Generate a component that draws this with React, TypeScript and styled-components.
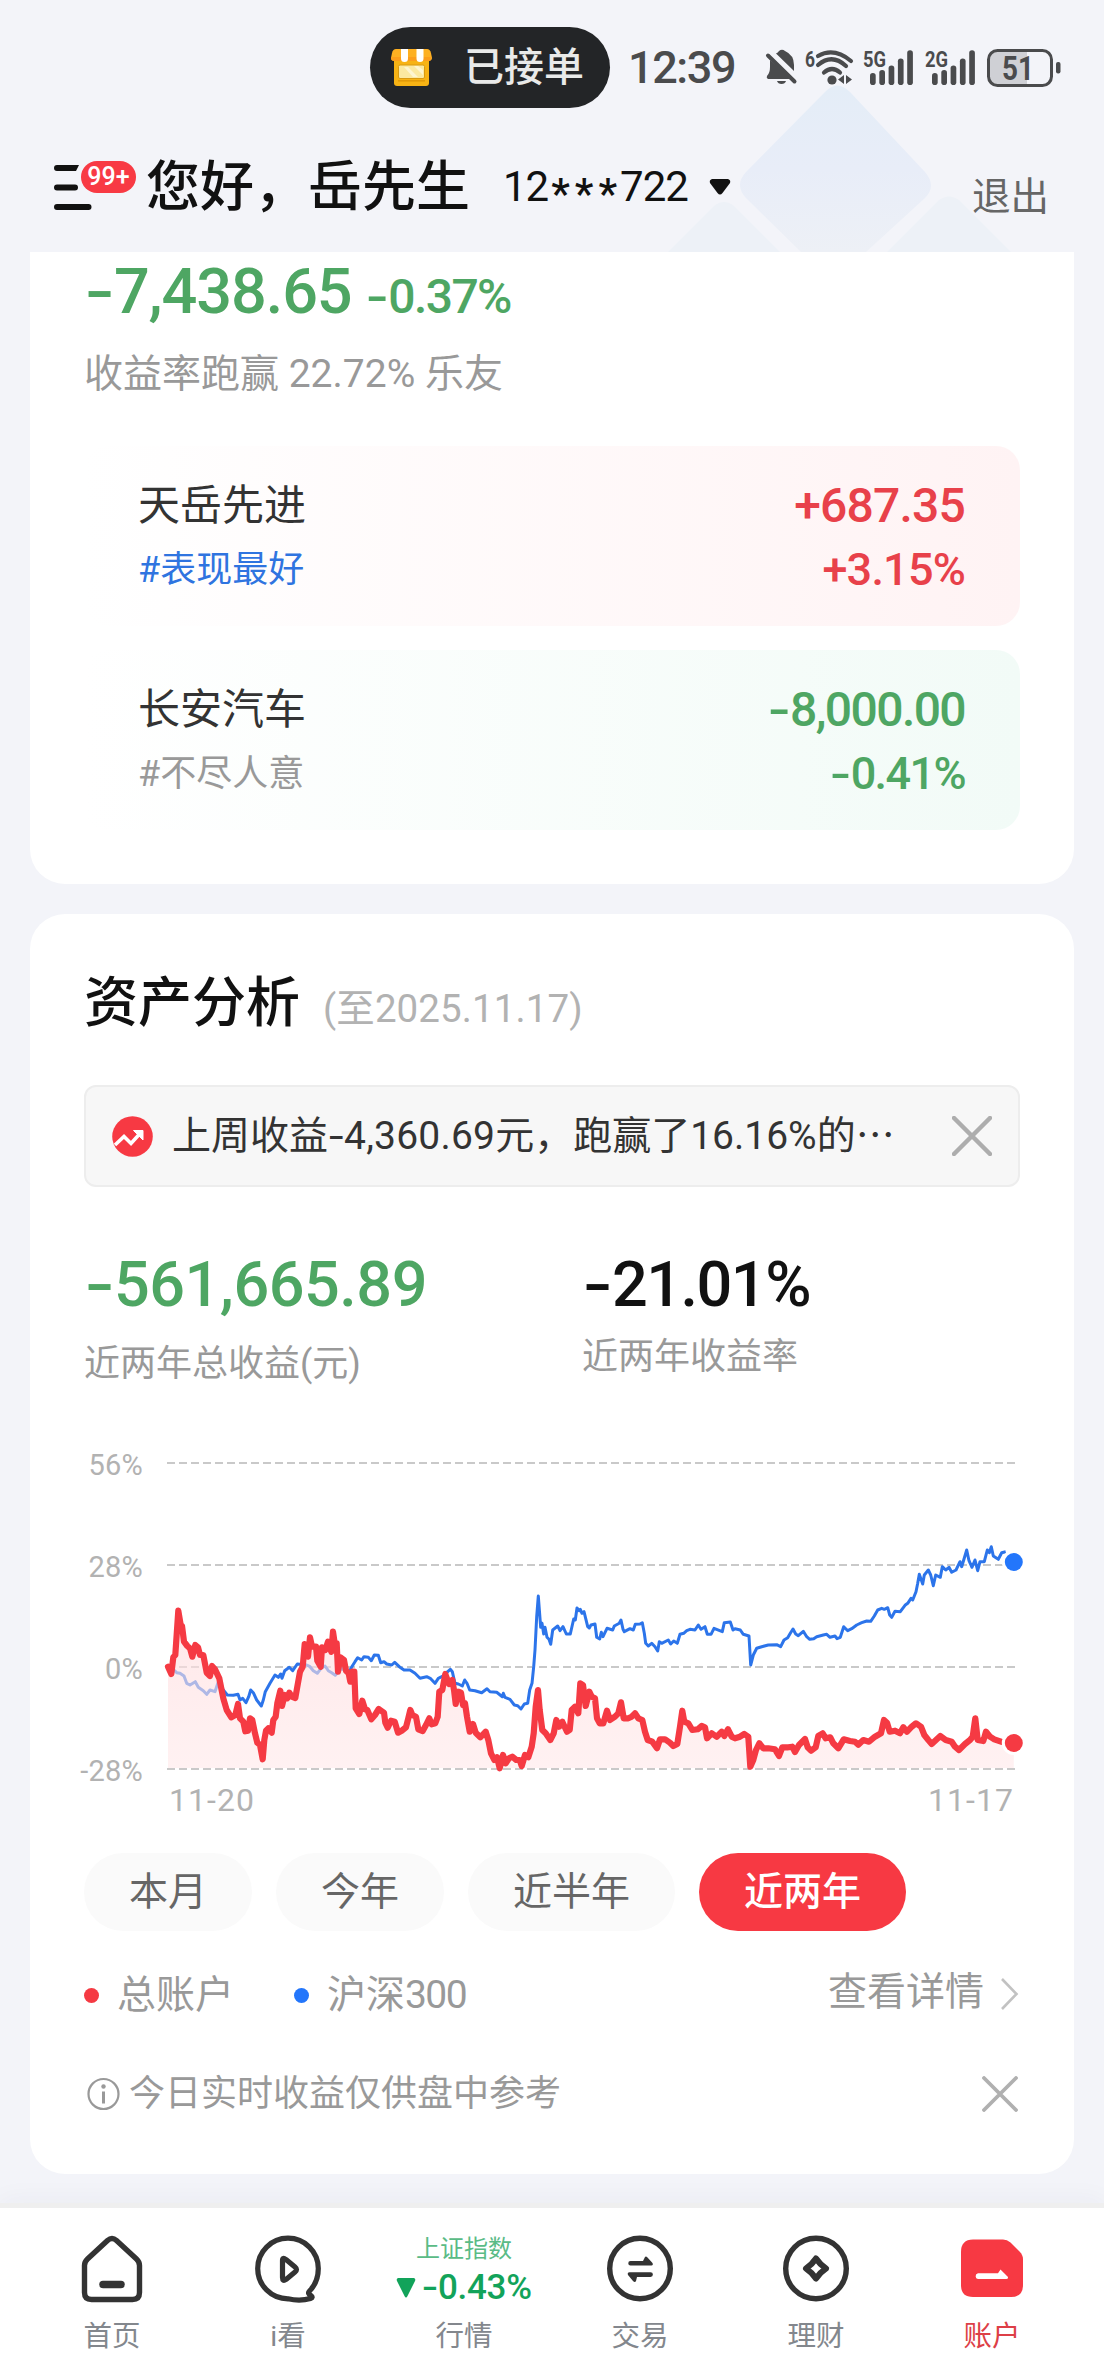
import React from "react";
import styled, { createGlobalStyle } from "styled-components";

const GREEN = "#4ea663";
const RED = "#e8414a";

const GlobalStyle = createGlobalStyle`
  * { box-sizing: border-box; }
  body {
    margin: 0;
    background: #f3f4f9;
    font-family: Roboto, "Noto Sans CJK SC", sans-serif;
    -webkit-font-smoothing: antialiased;
  }
`;

const Page = styled.div`
  width: 1104px;
  height: 2376px;
  display: flex;
  flex-direction: column;
  position: relative;
  overflow: hidden;
  background: #f3f4f9;
`;

const Decoration = styled.svg`
  position: absolute;
  left: 640px;
  top: 60px;
`;

type TextProps = {
  $size: number;
  $color?: string;
  $weight?: number;
  $track?: number;
  $line?: number;
};

const Text = styled.span<TextProps>`
  display: block;
  white-space: nowrap;
  font-size: ${(p) => p.$size}px;
  color: ${(p) => p.$color ?? "#333"};
  font-weight: ${(p) => p.$weight ?? 400};
  letter-spacing: ${(p) => p.$track ?? 0}px;
  line-height: ${(p) => (p.$line ? `${p.$line}px` : "1.2")};
`;

const Minus = styled.span`
  display: inline-block;
  margin: 0 0.06em 0 0.075em;
  transform: scaleX(1.35);
  letter-spacing: 0;
`;

const Digits = styled.span<{ $track: number }>`
  letter-spacing: ${(p) => p.$track}px;
`;

function Num({ value }: { value: string }) {
  const parts = value.split("-");
  return (
    <>
      {parts.map((part, i) => (
        <React.Fragment key={i}>
          {i > 0 && <Minus>-</Minus>}
          {part}
        </React.Fragment>
      ))}
    </>
  );
}

/* ---------- status bar ---------- */

const StatusBar = styled.div`
  position: relative;
  height: 135px;
  display: flex;
  align-items: center;
  padding-left: 370px;
  flex: none;
`;

const Island = styled.div`
  flex: none;
  width: 240px;
  height: 81px;
  border-radius: 41px;
  background: #232527;
  display: flex;
  align-items: center;
  padding-left: 20px;
  gap: 31px;
  margin-right: 18px;
`;

const Clock = styled(Text)`
  width: 107px;
`;

const StatusIcons = styled.svg`
  flex: none;
  margin-left: 30px;
  overflow: visible;
`;

function StoreIcon() {
  return (
    <svg width="43" height="40" viewBox="0 0 43 40">
      <rect x="4" y="8" width="35" height="30" rx="3" fill="#f7b314" />
      <rect x="8.500" y="17" width="26" height="13.500" rx="1.500" fill="#fbe9a0" stroke="#d99a10" />
      <path d="M14 19l9 10h5L18 19z M24 18l9 9v-5l-5-4z" fill="#fdf5d0" />
      <rect x="8" y="32" width="27" height="1.600" fill="#e29a08" />
      <path d="M6 1h31q3 0 4 4l1 5q0 3-4 3H5q-4 0-4-3l1-5q1-4 4-4z" fill="#fdb022" />
      <path d="M2 9h39v2q0 2-3 2H4q-3 0-3-3z" fill="#fc9e1c" />
      <path d="M11 1h7v9.500a3.500 3.500 0 0 1-7 0z M26.500 1h7v9.500a3.500 3.500 0 0 1-7 0z" fill="#fff" />
    </svg>
  );
}

const SIGNAL_TOPS = [24, 21, 16.5, 9.5, 1.3];

function Signal({ x, label }: { x: number; label: string }) {
  return (
    <g>
      <text x={x} y="18" fontSize="22" fontWeight="700" fill="#4a4b4d" textLength="23" lengthAdjust="spacingAndGlyphs">
        {label}
      </text>
      {SIGNAL_TOPS.map((top, i) => (
        <rect key={i} x={x + 7 + i * 9.3} y={top} width="5.700" height={36 - top} rx="2.800" fill="#4a4b4d" />
      ))}
    </g>
  );
}

function SystemIcons() {
  const ink = "#4a4b4d";
  return (
    <StatusIcons width="302" height="38" viewBox="0 0 302 38">
      <g fill={ink}>
        <path d="M11 4.500q2-1 3-2.500q3-2.500 6 0q9 4 9 14v6z" />
        <path d="M5 11l22 19H3q-2-1-1-3q3-3 3-9z" />
        <path d="M12 32h9q-1 3-4.500 3t-4.500-3z" />
        <path d="M3 6.500l26.500 26" stroke={ink} strokeWidth="4" strokeLinecap="round" />
      </g>
      <text x="40" y="18" fontSize="22" fontWeight="700" fill={ink} textLength="10" lengthAdjust="spacingAndGlyphs">
        6
      </text>
      <g fill="none" stroke={ink} strokeWidth="4.200" strokeLinecap="round">
        <path d="M53 7q16-9 33 5" />
        <path d="M53 16q14-12 28 1" />
        <path d="M59 23.500q8-7 16 0" />
      </g>
      <circle cx="67" cy="31" r="4.600" fill={ink} />
      <path d="M79 26v9l-6-4.500z M81 26v9l6-4.500z" fill={ink} />
      <Signal x={98} label="5G" />
      <Signal x={160} label="2G" />
      <path d="M231 2h31v34h-31q-8 0-8-8V10q0-8 8-8z" fill="#cfd0d5" />
      <rect x="223.500" y="1.500" width="63" height="35" rx="9" fill="none" stroke={ink} strokeWidth="3" />
      <rect x="291" y="13" width="4.500" height="11.500" rx="2" fill={ink} />
      <text x="237" y="30.500" fontSize="33" fontWeight="700" fill={ink} textLength="32" lengthAdjust="spacingAndGlyphs">
        51
      </text>
    </StatusIcons>
  );
}

/* ---------- header ---------- */

const Header = styled.header`
  position: relative;
  height: 117px;
  flex: none;
  display: flex;
  align-items: center;
  padding: 0 55px 17px 54px;
`;

const MenuButton = styled.div`
  position: relative;
  width: 92px;
  height: 48px;
`;

const Badge = styled.div`
  position: absolute;
  left: 27px;
  top: 0;
  width: 55px;
  height: 32px;
  border-radius: 16px;
  background: #f83a44;
  color: #fff;
  font-size: 25px;
  font-weight: 500;
  line-height: 32px;
  text-align: center;
`;

const MenuLines = styled.svg`
  display: block;
`;

const Greeting = styled(Text)`
  margin-top: 6px;
`;

const Account = styled.div`
  display: flex;
  align-items: center;
  gap: 21px;
  margin: 3px 0 0 33px;
  flex: 1;
`;

const Mask = styled.span`
  display: inline-block;
  font-weight: 500;
  letter-spacing: 5px;
  vertical-align: -7px;
  line-height: 1;
  margin: 0 -2px 0 3px;
`;

const Logout = styled(Text)`
  margin-top: 23px;
`;

/* ---------- cards ---------- */

const Card = styled.section<{ $first?: boolean }>`
  position: relative;
  flex: none;
  width: 1044px;
  height: ${(p) => (p.$first ? 632 : 1260)}px;
  margin: 0 30px 30px;
  padding: ${(p) => (p.$first ? 0 : 50)}px 54px 0;
  border-radius: ${(p) => (p.$first ? "0 0 35px 35px" : "35px")};
  background: #fff;
  display: flex;
  flex-direction: column;
`;

const BaselineRow = styled.div<{ $gap: number }>`
  display: flex;
  align-items: baseline;
  gap: ${(p) => p.$gap}px;
`;

const Beat = styled(Text)`
  margin: 18px 0 48px 0;
`;

const StockRow = styled.div<{ $tint: string }>`
  height: 180px;
  flex: none;
  margin-bottom: 24px;
  padding: 28px 55px 0 54px;
  border-radius: 24px;
  background: linear-gradient(90deg, #fff 0%, ${(p) => p.$tint} 100%);
  display: flex;
  justify-content: space-between;
`;

const StockSide = styled.div<{ $end?: boolean }>`
  display: flex;
  flex-direction: column;
  align-items: ${(p) => (p.$end ? "flex-end" : "flex-start")};
`;

const Notice = styled.div`
  height: 102px;
  margin-top: 41px;
  padding: 0 26px;
  display: flex;
  align-items: center;
  border: 2px solid #ededed;
  border-radius: 12px;
  background: #f7f7f7;
`;

const NoticeText = styled(Text)`
  flex: 1;
  margin-left: 19px;
`;

const Stats = styled.div`
  display: flex;
  height: 196px;
  margin-top: 57px;
`;

const Stat = styled.div<{ $width: number; $gap: number }>`
  width: ${(p) => p.$width}px;
  display: flex;
  flex-direction: column;
  gap: ${(p) => p.$gap}px;
`;

const Chart = styled.svg`
  display: block;
  flex: none;
  overflow: visible;
  font-family: Roboto, sans-serif;
`;

const Periods = styled.div`
  display: flex;
  gap: 24px;
  margin-top: 33px;
`;

const Period = styled.button<{ $active?: boolean; $wide?: boolean }>`
  width: ${(p) => (p.$wide ? 207 : 168)}px;
  height: 78px;
  padding: 0;
  border: 0;
  border-radius: 39px;
  font-family: inherit;
  font-size: 39px;
  line-height: 78px;
  font-weight: ${(p) => (p.$active ? 500 : 400)};
  color: ${(p) => (p.$active ? "#fff" : "#666")};
  background: ${(p) => (p.$active ? "#f73943" : "#fafafa")};
`;

const Legend = styled.div`
  height: 60px;
  margin-top: 34px;
  display: flex;
  align-items: center;
`;

const Dot = styled.i<{ $color: string }>`
  width: 15px;
  height: 15px;
  border-radius: 50%;
  background: ${(p) => p.$color};
`;

const LegendItem = styled.div<{ $width: number }>`
  width: ${(p) => p.$width}px;
  display: flex;
  align-items: center;
  gap: 18px;
`;

const Details = styled.div`
  margin: 0 1px 7px auto;
  display: flex;
  align-items: center;
  gap: 16px;
`;

const Hint = styled.div`
  height: 50px;
  margin-top: 44px;
  display: flex;
  align-items: center;
  padding: 0 2px 0 3px;
`;

const HintText = styled(Text)`
  flex: 1;
  margin-left: 9px;
`;

/* ---------- tab bar ---------- */

const TabBar = styled.nav`
  position: relative;
  flex: none;
  height: 173px;
  margin-top: -1px;
  padding: 0 24px;
  border-top: 5px solid #efefef;
  box-shadow: 0 -4px 24px rgba(60, 60, 80, 0.04);
  background: #fff;
  display: flex;
`;

const Tab = styled.div`
  width: 176px;
  padding-top: 27px;
  display: flex;
  flex-direction: column;
  align-items: center;
`;

const TabArt = styled.div`
  height: 82px;
`;

const Quote = styled.div`
  height: 82px;
  display: flex;
  flex-direction: column;
  align-items: center;
`;

const QuoteValue = styled.div`
  display: flex;
  align-items: center;
  gap: 5px;
  margin-top: 8px;
`;

/* ---------- chart data ---------- */

// Pairs of x,y at three units per pixel, with the zero line at y = 381.
const ACCOUNT = [
  [0, "24,380 34,402 40,352 46,345 55,212 62,255 66,258 72,305 82,318 90,325 97,350 106,315 114,322 120,345 130,345 140,398 150,408 156,378 165,388 178,415 190,475 200,510 214,532 226,525 234,492 240,535 250,545 256,574 264,572 270,535 277,540 285,580 292,608 300,615 308,658 313,600 318,572 325,565 335,578 340,540 347,530 352,490 361,452 366,498 374,465 382,475 388,458 395,470 406,474 412,440 420,395 428,380 434,312 444,350 450,292 456,320 468,320 472,362 482,380 486,322 496,330 504,305 514,335 519,275 524,310 530,310 534,395 541,352 552,360 558,392 566,400 571,425 576,395 583,395 587,505 598,522 607,482 615,508 622,510 634,538 645,525 656,507 672,518 676,548 683,563 693,542 704,545 714,578 725,572 738,562 745,535 751,510 757,525 768,530 775,568 788,573 798,555 808,535 815,553 826,550 833,530 838,455 847,450 856,402"],
  [855, "12,432 22,420 27,450 32,492 40,455 48,458 54,495 60,490 66,530 74,575 84,552 92,578 106,592 122,575 130,600 138,640 148,660 156,652 164,685 174,645 182,670 192,655 202,650 214,660 224,660 230,678 240,645 250,652 260,620 266,580 272,500 279,450 284,510 292,570 302,580 316,600 326,580 334,540 342,560 352,545 366,575 374,570 380,510 390,500 400,520 406,430 414,435 422,498 433,455 440,470 450,475 456,535 464,550 475,550 486,512 495,540 510,530 520,520 528,487 536,535 550,535 560,530 570,520 580,535 592,540 600,575 608,600 622,605 636,625 645,598 660,598 675,608 685,618 697,612 705,560 712,512 718,545 730,550 742,570 758,568 770,558 780,562 786,595 800,580 815,590 830,575 838,588 849,568 860,590"],
  [1725, "0,595 15,590 28,582 40,590 46,680 55,660 63,630 73,610 85,625 100,625 120,628 132,648 142,622 160,622 172,620 180,636 192,615 210,597 218,622 228,632 242,622 250,588 263,580 272,595 286,592 295,610 310,625 326,598 345,603 360,605 370,614 385,600 402,605 420,590 438,580 447,540 456,548 464,575 480,572 495,580 505,562 516,575 530,560 543,550 558,560 568,585 580,600 590,612 603,600 616,588 632,600 650,605 660,620 672,630 690,612 705,600 713,590 721,535 728,600 745,603 753,575 765,590 778,598 798,605"],
] as const;

const INDEX = [
  [0, "24,380 36,385 50,398 60,400 72,408 80,430 90,435 106,425 115,442 130,452 140,463 150,450 165,455 175,425 190,450 202,465 220,466 234,463 240,480 248,475 258,488 266,470 272,450 280,458 290,480 304,498 310,480 316,455 330,430 345,405 355,412 362,402 366,415 374,392 388,382 398,392 412,372 440,375 450,380 460,392 472,400 483,385 495,378 505,392 515,398 526,406 545,385 565,400 577,378 585,365 593,353 605,360 612,350 625,352 634,362 643,345 655,346 662,368 672,365 680,372 695,375 704,367 718,380 732,390 750,390 765,400 780,415 800,410 812,416 825,430 835,415 845,410 855,405 864,394"],
  [855, "16,388 22,395 30,430 40,432 52,438 59,420 66,430 74,450 90,452 110,458 126,446 135,455 155,457 172,470 175,460 180,472 195,478 208,495 218,497 228,507 238,492 248,490 254,450 261,430 266,380 270,330 275,230 280,168 287,262 291,250 296,282 300,262 306,292 312,298 317,313 323,270 338,258 345,272 354,260 364,282 376,282 386,237 391,240 396,204 402,212 406,208 411,220 417,215 428,260 433,264 438,255 450,252 455,292 464,297 469,277 474,290 486,265 503,270 508,258 523,250 528,240 534,268 538,275 555,266 565,270 571,253 585,252 592,248 598,280 602,310 610,318 620,310 630,320 638,333 643,305 650,310 670,300 677,312 686,303 697,310 705,283 716,280 725,272 735,268 750,270 760,255 768,268 780,260 787,283 798,283 807,265 832,275 838,248 856,246 864,270"],
  [1725, "0,266 16,270 25,283 42,288 47,375 55,345 65,325 80,320 100,315 125,314 137,320 147,300 158,293 166,280 174,267 182,282 190,287 205,274 215,290 224,298 236,296 245,290 265,285 275,283 285,292 300,288 306,296 316,292 326,260 338,272 350,266 365,255 380,248 395,243 407,244 418,228 428,210 440,205 448,208 458,203 464,225 470,232 480,214 496,215 510,196 518,190 528,175 533,180 543,155 548,130 553,103 563,132 568,105 580,90 587,105 595,137 602,105 616,112 622,80 632,90 642,82 650,97 663,90 675,65 680,80 695,30 702,62 711,82 720,60 728,92 735,65 748,65 757,30 763,38 769,20 775,48 790,58 800,38 812,35"],
] as const;

function toPoints(runs: readonly (readonly [number, string])[]) {
  return runs
    .flatMap(([shift, run]) =>
      run.split(" ").map((pair) => {
        const [x, y] = pair.split(",").map(Number);
        return `${((x + shift) / 3 + 76).toFixed(1)},${(y / 3 + 100).toFixed(1)}`;
      })
    )
    .join(" ");
}

const GRID = [
  { y: 23, label: "56%" },
  { y: 125, label: "28%" },
  { y: 227, label: "0%" },
  { y: 329, label: "-28%" },
];

function ReturnChart() {
  const account = toPoints(ACCOUNT);
  const index = toPoints(INDEX);
  return (
    <Chart width="950" height="380" viewBox="0 0 950 380">
      <defs>
        <linearGradient id="area" x1="0" y1="0" x2="0" y2="1">
          <stop offset="0" stopColor="#ffdadc" />
          <stop offset="1" stopColor="#ffe9ea" />
        </linearGradient>
      </defs>
      {GRID.map((line) => (
        <g key={line.label}>
          <path d={`M83 ${line.y}H931`} stroke="#c9c9c9" strokeWidth="2" strokeDasharray="8 4" />
          <text x="59" y={line.y + 11.5} fontSize="29" letterSpacing="0.2" fill="#b2b2b2" textAnchor="end">
            {line.label}
          </text>
        </g>
      ))}
      <polyline points={index} fill="none" stroke="#2c74ea" strokeWidth="3" strokeLinejoin="round" />
      <polygon points={`84,328 ${account} 929.8,303 929.8,328`} fill="url(#area)" fillOpacity="0.62" />
      <polyline points={account} fill="none" stroke="#f53a43" strokeWidth="6.200" strokeLinejoin="round" strokeLinecap="round" />
      <circle cx="929.8" cy="122" r="12" fill="#fff" />
      <circle cx="929.8" cy="122" r="9" fill="#2376fb" />
      <circle cx="929.8" cy="303" r="12" fill="#fff" />
      <circle cx="929.8" cy="303" r="9" fill="#f53a43" />
      <text x="85" y="371" fontSize="32" fill="#b2b2b2" textLength="85">
        11-20
      </text>
      <text x="844" y="371" fontSize="32" fill="#b2b2b2" textLength="85">
        11-17
      </text>
    </Chart>
  );
}

function Cross({ size, width, color }: { size: number; width: number; color: string }) {
  return (
    <svg width={size} height={size} viewBox={`0 0 ${size} ${size}`}>
      <path
        d={`M2 2L${size - 2} ${size - 2}M${size - 2} 2L2 ${size - 2}`}
        stroke={color}
        strokeWidth={width}
        strokeLinecap="round"
      />
    </svg>
  );
}

/* ---------- tab icons ---------- */

const INK = "#333";

const HomeIcon = () => (
  <svg width="66" height="68" viewBox="0 0 66 68">
    <path
      d="M28.500 5.500q4.500-4 9 0l20 18.500q3 2.800 3 6.500v27q0 7-7 7h-41q-7 0-7-7v-27q0-3.700 3-6.500z"
      fill="none" stroke={INK} strokeWidth="5.400" strokeLinejoin="round"
    />
    <path d="M24 49.500h18" stroke={INK} strokeWidth="7.500" strokeLinecap="round" />
  </svg>
);

const VideoIcon = () => (
  <svg width="66" height="68" viewBox="0 0 66 68">
    <path
      d="M54.500 56Q63.300 47 63.300 33.500A30.300 30.300 0 1 0 33 63.800Q45 66.500 55.500 63.500Q58.500 62.500 56 60.500Q52 58.500 54.500 56z"
      fill="none" stroke={INK} strokeWidth="5.200" strokeLinejoin="round"
    />
    <path d="M27.500 25.500v17q0 4.500 3.500 2l9-7.500q3-2.500 0-5l-9-7.500q-3.500-2.500-3.500 1z" fill="none" stroke={INK} strokeWidth="5.200" strokeLinejoin="round" />
  </svg>
);

const TradeIcon = () => (
  <svg width="66" height="68" viewBox="0 0 66 68">
    <circle cx="33" cy="33.500" r="30.300" fill="none" stroke={INK} strokeWidth="5.400" />
    <path d="M23.500 26H36l2-4q1-1 2.500.5l5 5.500q1 2-1 2.500h-21a2.200 2.200 0 0 1 0-4.500z" fill={INK} />
    <path d="M43.500 42H30l-1 4q-1 2-3 0l-5-6q-1-2.500 1.500-2.800h21a2.400 2.400 0 0 1 0 4.800z" fill={INK} />
  </svg>
);

const WealthIcon = () => (
  <svg width="66" height="68" viewBox="0 0 66 68">
    <circle cx="33" cy="33.500" r="30.300" fill="none" stroke={INK} strokeWidth="5.400" />
    <path d="M33 23.500q4 6 10 10q-6 4-10 10q-4-6-10-10q6-4 10-10z" fill="none" stroke={INK} strokeWidth="6" strokeLinejoin="round" />
  </svg>
);

const AccountIcon = () => (
  <svg width="66" height="68" viewBox="0 0 66 68">
    <path d="M14 4.500h30q4 0 7.500 3l9 9q3.500 3.500 3.500 7.500v26q0 12-12 12H14q-12 0-12-12v-33q0-12.500 12-12.500z" fill="#f73943" />
    <path d="M19 38.300h20l2.500-3.800 7.500 7.500q.5 2-1.500 2H19a2.900 2.900 0 0 1 0-5.700z" fill="#fff" />
  </svg>
);

function PlainTab({ icon, label, active }: { icon: React.ReactNode; label: string; active?: boolean }) {
  return (
    <Tab>
      <TabArt>{icon}</TabArt>
      <Text $size={28.5} $line={40} $color={active ? "#dd3f47" : "#83878d"}>
        {label}
      </Text>
    </Tab>
  );
}

type StockProps = {
  name: string;
  tag: string;
  tagColor: string;
  amount: string;
  rate: string;
  color: string;
  tint: string;
  track: number;
};

function Stock({ name, tag, tagColor, amount, rate, color, tint, track }: StockProps) {
  return (
    <StockRow $tint={tint}>
      <StockSide>
        <Text $size={42} $line={64}>{name}</Text>
        <Text $size={36} $line={64} $color={tagColor}>{tag}</Text>
      </StockSide>
      <StockSide $end>
        <Text $size={48} $line={64} $weight={500} $track={track} $color={color}><Num value={amount} /></Text>
        <Text $size={45} $line={64} $weight={500} $track={track} $color={color}><Num value={rate} /></Text>
      </StockSide>
    </StockRow>
  );
}

export default function App() {
  return (
    <Page lang="zh-CN">
      <GlobalStyle />
      <Decoration width="400" height="192" viewBox="0 0 400 192">
        <defs>
          <linearGradient id="dia" x1="0" y1="0" x2="0" y2="1">
            <stop offset="0" stopColor="#e4edf7" />
            <stop offset="0.5" stopColor="#e8edf8" />
            <stop offset="1" stopColor="#edf0f6" />
          </linearGradient>
        </defs>
        <path d="M185 32q12-13 25 0l75 80q12 14 0 26l-59 54h-65l-55-54q-12-13 0-26z" fill="url(#dia)" />
        <path d="M74 146q10-8 20 0l46 46H28z" fill="#edf1f7" />
        <path d="M298 141q11-9 22 0l51 51H247z" fill="#edf1f7" />
      </Decoration>

      <StatusBar>
        <Island>
          <StoreIcon />
          <Text $size={40} $color="#e9eae9" $line={62} $weight={500}>已接单</Text>
        </Island>
        <Clock $size={45} $color="#4a4b4d" $line={64} $track={-1.4} $weight={500}>12:39</Clock>
        <SystemIcons />
      </StatusBar>

      <Header>
        <MenuButton>
          <MenuLines width="40" height="52" viewBox="0 0 40 52">
            <path d="M3 4H25l-3 6H3a3 3 0 0 1 0-6z M3 23.500H21a3 3 0 0 1 0 6H3a3 3 0 0 1 0-6z M3 43H34.500a3 3 0 0 1 0 6H3a3 3 0 0 1 0-6z" fill="#111" />
          </MenuLines>
          <Badge>99+</Badge>
        </MenuButton>
        <Greeting $size={54} $line={70} $weight={500} $color="#111">您好，岳先生</Greeting>
        <Account>
          <Text $size={42} $line={62} $color="#111" $track={-1}>12<Mask>***</Mask>722</Text>
          <svg width="22" height="18" viewBox="0 0 22 18">
            <path d="M3 1h16q3 1 2 4l-7.500 10q-2.500 3-5 0L1 5q-1-3 2-4z" fill="#111" />
          </svg>
        </Account>
        <Logout $size={38.5} $line={50} $color="#666">退出</Logout>
      </Header>

      <Card $first>
        <BaselineRow $gap={14}>
          <Text $size={63} $line={80} $weight={500} $track={-1.1} $color={GREEN}><Num value="-7,438.65" /></Text>
          <Text $size={48} $line={60} $weight={500} $track={-1.6} $color={GREEN}><Num value="-0.37%" /></Text>
        </BaselineRow>
        <Beat $size={39} $line={48} $color="#999">
          收益率跑赢 <Digits $track={0}>22.72%</Digits> 乐友
        </Beat>
        <Stock name="天岳先进" tag="#表现最好" tagColor="#2f74e0" amount="+687.35" rate="+3.15%" color={RED} tint="#fff3f4" track={-0.8} />
        <Stock name="长安汽车" tag="#不尽人意" tagColor="#999" amount="-8,000.00" rate="-0.41%" color={GREEN} tint="#f2fbf7" track={-1.6} />
      </Card>

      <Card>
        <BaselineRow $gap={23}>
          <Text $size={54} $line={80} $weight={500} $color="#111">资产分析</Text>
          <Text $size={38.5} $line={60} $track={0.1} $color="#b2b2b2">(至2025.11.17)</Text>
        </BaselineRow>

        <Notice>
          <svg width="41" height="41" viewBox="0 0 41 41">
            <circle cx="20.500" cy="20.500" r="20.300" fill="#f73943" />
            <path d="M3 29l9-8.500 7 7 9-10" fill="none" stroke="#fff" strokeWidth="3.600" />
            <path d="M21.500 14.500h9.500v9.500z" fill="#fff" stroke="#fff" />
          </svg>
          <NoticeText $size={39} $line={60}>
            上周收益<Digits $track={0.2}><Num value="-4,360.69" /></Digits>元，跑赢了16.16%的⋯
          </NoticeText>
          <Cross size={40} width={4.5} color="#adadad" />
        </Notice>

        <Stats>
          <Stat $width={498} $gap={17}>
            <Text $size={63} $line={81} $weight={500} $track={-0.5} $color={GREEN}><Num value="-561,665.89" /></Text>
            <Text $size={36} $line={44} $color="#999">近两年总收益(元)</Text>
          </Stat>
          <Stat $width={400} $gap={10}>
            <Text $size={63} $line={81} $weight={500} $track={-1.5} $color="#111"><Num value="-21.01%" /></Text>
            <Text $size={36} $line={44} $color="#999">近两年收益率</Text>
          </Stat>
        </Stats>

        <ReturnChart />

        <Periods>
          <Period>本月</Period>
          <Period>今年</Period>
          <Period $wide>近半年</Period>
          <Period $wide $active>近两年</Period>
        </Periods>

        <Legend>
          <LegendItem $width={210}>
            <Dot $color="#f53a43" />
            <Text $size={39} $line={60} $color="#999">总账户</Text>
          </LegendItem>
          <LegendItem $width={200}>
            <Dot $color="#2376fb" />
            <Text $size={39} $line={60} $color="#999">沪深<Digits $track={-1.6}>300</Digits></Text>
          </LegendItem>
          <Details>
            <Text $size={39} $line={52} $color="#999">查看详情</Text>
            <svg width="19" height="38" viewBox="0 0 19 38">
              <path d="M2 6l14.500 15L2 36" fill="none" stroke="#c2c2c2" strokeWidth="2.600" />
            </svg>
          </Details>
        </Legend>

        <Hint>
          <svg width="33" height="34" viewBox="0 0 33 34">
            <circle cx="16.500" cy="17" r="15" fill="none" stroke="#999" strokeWidth="2.200" />
            <path d="M16.500 14.500v12" stroke="#999" strokeWidth="3" />
            <circle cx="16.500" cy="9.500" r="2.200" fill="#999" />
          </svg>
          <HintText $size={36} $line={50} $color="#999">今日实时收益仅供盘中参考</HintText>
          <Cross size={36} width={3.8} color="#b0b0b0" />
        </Hint>
      </Card>

      <TabBar>
        <PlainTab icon={<HomeIcon />} label="首页" />
        <PlainTab icon={<VideoIcon />} label="i看" />
        <Tab>
          <Quote>
            <Text $size={24} $line={28} $color="#5abb86">上证指数</Text>
            <QuoteValue>
              <svg width="20" height="20" viewBox="0 0 20 20">
                <path d="M2 0h16q2 1 1 3l-7.500 15q-1.500 3-3 0L1 3q-1-2 1-3z" fill="#12a35a" />
              </svg>
              <Text $size={35} $line={34} $weight={500} $color="#12a35a" $track={-0.3}><Num value="-0.43%" /></Text>
            </QuoteValue>
          </Quote>
          <Text $size={28.5} $line={40} $color="#83878d">行情</Text>
        </Tab>
        <PlainTab icon={<TradeIcon />} label="交易" />
        <PlainTab icon={<WealthIcon />} label="理财" />
        <PlainTab icon={<AccountIcon />} label="账户" active />
      </TabBar>
    </Page>
  );
}
